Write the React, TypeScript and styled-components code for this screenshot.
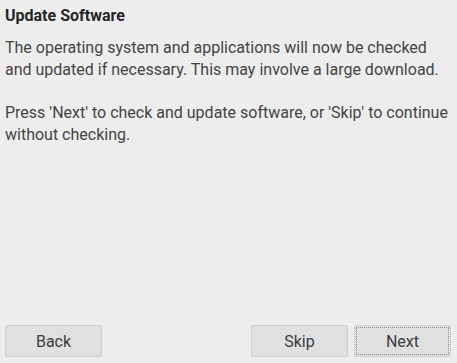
import React from "react";
import styled, { createGlobalStyle } from "styled-components";

const Global = createGlobalStyle`
  html, body { margin: 0; padding: 0; background: #ededed; }
  #root { width: 457px; height: 363px; }
`;

const Page = styled.div`
  box-sizing: border-box;
  width: 457px;
  height: 363px;
  display: flex;
  flex-direction: column;
  padding: 6px 6px 6px 5px;
  font-family: Roboto, "Liberation Sans", sans-serif;
  color: #444444;
`;

const Title = styled.h1`
  margin: 0;
  font-size: 16px;
  font-weight: 700;
  line-height: 20px;
  color: #262626;
`;

const Body = styled.div`
  flex: 1;
  margin-top: 11px;
  font-size: 16px;
  line-height: 21.7px;
`;

const Para = styled.p`
  margin: 0 0 21.7px 0;
`;

const Footer = styled.div`
  display: flex;
  align-items: center;
  gap: 6px;
`;

const Spacer = styled.div`
  flex: 1;
`;

const Button = styled.button<{ $focused?: boolean }>`
  box-sizing: border-box;
  width: 97px;
  height: 32px;
  margin: 0;
  padding: 0;
  background: #e0e0e0;
  border: 1px solid #cfcfcf;
  border-radius: 2px;
  font-family: Roboto, "Liberation Sans", sans-serif;
  font-size: 16px;
  color: #3c3c3c;
  position: relative;
  &::after {
    content: "";
    display: ${(p) => (p.$focused ? "block" : "none")};
    position: absolute;
    inset: 1px;
    border: 1px dotted #8a8a8a;
  }
`;

export default function App() {
  return (
    <>
      <Global />
      <Page>
        <Title>Update Software</Title>
        <Body>
          <Para>
            The operating system and applications will now be checked and updated if
            necessary. This may involve a large download.
          </Para>
          <Para>
            Press 'Next' to check and update software, or 'Skip' to continue without
            checking.
          </Para>
        </Body>
        <Footer>
          <Button>Back</Button>
          <Spacer />
          <Button>Skip</Button>
          <Button $focused>Next</Button>
        </Footer>
      </Page>
    </>
  );
}
